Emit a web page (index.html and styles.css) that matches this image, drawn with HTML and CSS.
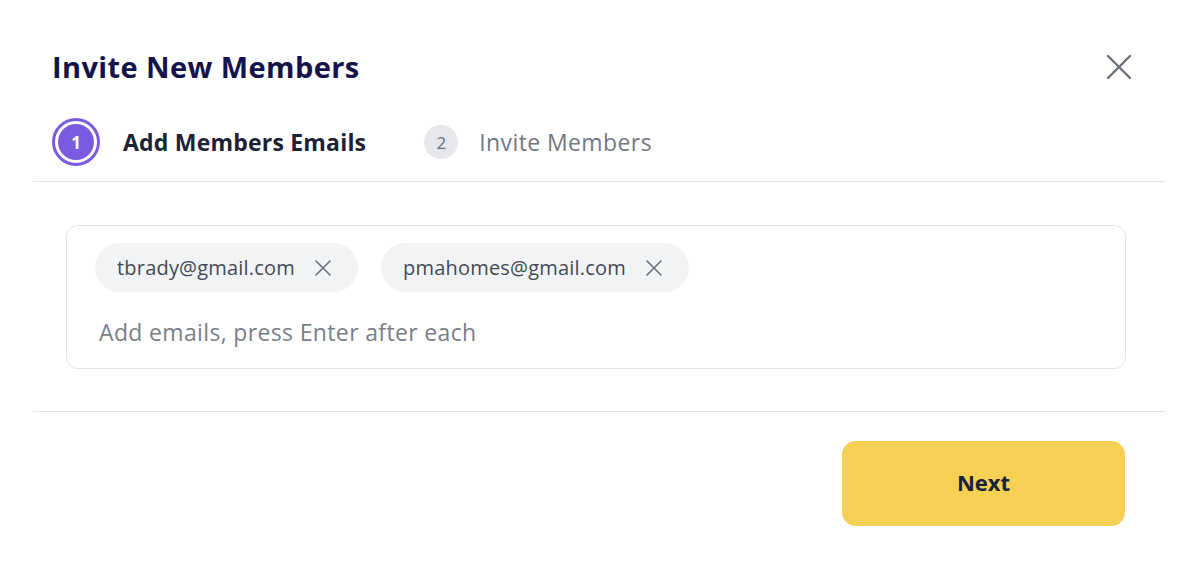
FILE: index.html
```html
<!DOCTYPE html>
<html>
<head>
<meta charset="utf-8">
<link rel="stylesheet" href="styles.css">
</head>
<body>
<div class="modal">
  <div class="header">
    <h1 class="title">Invite New Members</h1>
    <button class="close" aria-label="Close">
      <svg width="24" height="24" viewBox="0 0 24 24"><path d="M1 1L23 23M23 1L1 23" stroke="#6b6f7b" stroke-width="2.4" stroke-linecap="round"/></svg>
    </button>
  </div>
  <div class="steps">
    <div class="step active">
      <span class="step-num"><span class="step-inner">1</span></span>
      <span class="step-label">Add Members Emails</span>
    </div>
    <div class="step">
      <span class="step-num">2</span>
      <span class="step-label">Invite Members</span>
    </div>
  </div>
  <div class="divider"></div>
  <div class="body">
    <div class="input-box">
      <div class="chips">
        <span class="chip">tbrady@gmail.com
          <svg class="chip-x" width="16" height="16" viewBox="0 0 16 16"><path d="M1 1L15 15M15 1L1 15" stroke="#6b6f7b" stroke-width="1.6" stroke-linecap="round"/></svg>
        </span>
        <span class="chip">pmahomes@gmail.com
          <svg class="chip-x" width="16" height="16" viewBox="0 0 16 16"><path d="M1 1L15 15M15 1L1 15" stroke="#6b6f7b" stroke-width="1.6" stroke-linecap="round"/></svg>
        </span>
      </div>
      <div class="placeholder">Add emails, press Enter after each</div>
    </div>
  </div>
  <div class="divider"></div>
  <div class="footer">
    <button class="next">Next</button>
  </div>
</div>
</body>
</html>
```
FILE: styles.css
```css
* { box-sizing: border-box; }
body {
  margin: 0;
  background: #fff;
  font-family: "Open Sans", sans-serif;
}
.modal {
  margin-left: 33px;
  width: 1132px;
}
.header {
  display: flex;
  justify-content: space-between;
  align-items: center;
  padding: 48px 34px 0 19px;
  height: 86px;
}
.title {
  margin: 0;
  font-size: 29px;
  letter-spacing: 0.4px;
  font-weight: 700;
  color: #14134a;
  line-height: 36px;
}
.close {
  border: 0;
  background: none;
  padding: 0;
  width: 24px;
  height: 24px;
  display: flex;
}
.steps {
  display: flex;
  align-items: center;
  padding: 17px 0 0 19px;
  height: 95px;
  gap: 58px;
}
.step {
  display: flex;
  align-items: center;
  gap: 21px;
}
.step-num {
  width: 34px;
  height: 34px;
  border-radius: 50%;
  background: #e6e7ea;
  color: #6b6f7b;
  font-size: 17px;
  font-weight: 500;
  display: flex;
  align-items: center;
  justify-content: center;
}
.step.active .step-num {
  width: 48px;
  height: 48px;
  background: #fff;
  border: 3px solid #7b5ce1;
  padding: 3px;
}
.step-inner {
  width: 100%;
  height: 100%;
  border-radius: 50%;
  background: #7b5ce1;
  color: #fff;
  font-weight: 700;
  display: flex;
  align-items: center;
  justify-content: center;
}
.step.active { gap: 23px; }
.step-label {
  font-size: 23px;
  letter-spacing: 0.4px;
  color: #737784;
}
.step.active .step-label {
  font-weight: 700;
  letter-spacing: 0.2px;
  color: #1c2234;
}
.divider {
  height: 1px;
  background: #e3e4e7;
}
.body {
  padding: 43px 39px 42px 33px;
}
.input-box {
  border: 1px solid #e2e3e6;
  border-radius: 12px;
  padding: 17px 28px 18px 28px;
  height: 144px;
}
.chips {
  display: flex;
  gap: 23px;
}
.chip {
  display: inline-flex;
  align-items: center;
  height: 49px;
  padding: 0 27px 0 22px;
  border-radius: 25px;
  background: #f2f3f5;
  font-size: 20px;
  letter-spacing: 0.2px;
  color: #444a55;
  gap: 20px;
}
.placeholder {
  margin-top: 26px;
  padding-left: 4px;
  font-size: 23px;
  letter-spacing: 0.35px;
  line-height: 28px;
  color: #7b7e86;
}
.footer {
  display: flex;
  justify-content: flex-end;
  padding: 29px 40px 0 0;
}
.next {
  width: 283px;
  height: 85px;
  border: 0;
  border-radius: 14px;
  background: #f6d053;
  font-family: "Open Sans", sans-serif;
  font-size: 22px;
  font-weight: 700;
  color: #1a2238;
  padding: 0 0 4px;
}
```
